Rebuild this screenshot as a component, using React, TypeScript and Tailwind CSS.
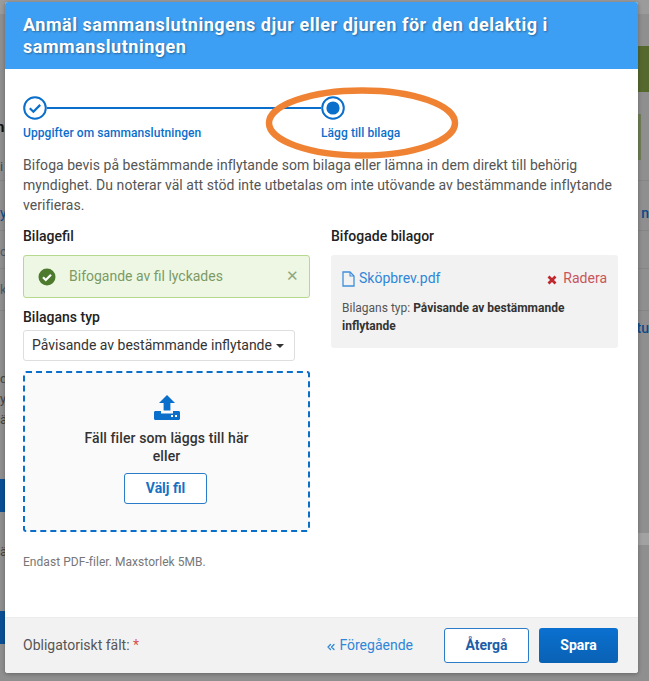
import { ChevronsLeft } from "lucide-react";

const font = "font-['Roboto',sans-serif]";

function CheckCircle() {
  return (
    <svg width="24" height="24" viewBox="0 0 24 24" fill="none" className="shrink-0">
      <circle cx="12" cy="12" r="10.8" stroke="#0a6ecb" strokeWidth="2" fill="#fff" />
      <path d="M6.8 12.2l3.6 3.5 6.8-6.8" stroke="#0a6ecb" strokeWidth="2.2" />
    </svg>
  );
}

function ActiveCircle() {
  return (
    <svg width="24" height="24" viewBox="0 0 24 24" fill="none" className="shrink-0">
      <circle cx="12" cy="12" r="10.8" stroke="#0a6ecb" strokeWidth="2" fill="#fff" />
      <circle cx="12" cy="12" r="6.6" fill="#0a6ecb" />
    </svg>
  );
}

function UploadIcon() {
  return (
    <svg width="28" height="28" viewBox="0 0 28 28" className="block">
      <path d="M14 1l8 8h-4.6v7.5h-6.8V9H6z" fill="#0a6ecb" />
      <path d="M1 18.5c0-.8.6-1.5 1.5-1.5h5.5v2.5h12V17h5.500c.9 0 1.500.7 1.500 1.500v6c0 .9-.6 1.500-1.500 1.500h-23C1.600 26 1 25.400 1 24.500z" fill="#0a6ecb" />
      <rect x="18" y="21" width="2" height="2" fill="#fff" />
      <rect x="22" y="21" width="2" height="2" fill="#fff" />
    </svg>
  );
}

export default function App() {
  return (
    <div className={`${font} relative w-[649px] h-[681px] overflow-hidden bg-[#8f8f8f] pl-[5px] pt-[2px]`}>
      {/* page behind the modal */}
      <div className="absolute left-0 top-0 w-full h-[14px] bg-[#9b9b9b]" />
      <div className="absolute right-0 top-[46px] w-[11px] h-[46px] bg-[#55692f]" />
      <div className="absolute left-[638px] top-[114px] w-[3px] h-[46px] bg-[#6f7f58]" />
      <div className="absolute left-0 top-[180px] w-full h-px bg-[#858585]" />
      <div className="absolute left-0 top-[230px] w-full h-px bg-[#858585]" />
      <div className="absolute left-0 top-[268px] w-full h-px bg-[#858585]" />
      <div className="absolute left-0 top-[310px] w-full h-px bg-[#858585]" />
      <div className="absolute left-[-4px] top-[116px] text-[15px] font-bold text-[#111]">n</div>
      <div className="absolute left-0 top-[157px] text-[13px] text-[#444]">i</div>
      <div className="absolute left-0 top-[203px] text-[14px] text-[#0a4a8a]">y</div>
      <div className="absolute left-0 top-[242px] text-[13px] text-[#4a5a6a]">c</div>
      <div className="absolute left-0 top-[280px] text-[13px] text-[#4a5a6a]">k</div>
      <div className="absolute left-0 top-[369px] text-[13px] text-[#444]">d</div>
      <div className="absolute left-0 top-[389px] text-[13px] text-[#444]">y</div>
      <div className="absolute left-0 top-[410px] text-[13px] text-[#444]">ä</div>
      <div className="absolute left-0 top-[542px] text-[13px] text-[#444]">ä</div>
      <div className="absolute right-0 top-[203px] text-[14px] font-medium text-[#0a4a8a]">n</div>
      <div className="absolute right-0 top-[318px] text-[14px] font-medium text-[#0a4a8a]">tu</div>
      <div className="absolute left-0 top-[479px] w-[5px] h-[33px] bg-[#0a4f96]" />
      <div className="absolute left-0 top-[611px] w-[5px] h-[33px] bg-[#0a4f96]" />
      <div className="absolute right-0 top-[533px] w-[11px] h-[12px] bg-[#a2a2a2]" />

      {/* modal */}
      <div className="relative flex flex-col w-[633px] h-[671px] rounded-[3px] bg-white overflow-hidden shadow-[0_1px_4px_rgba(0,0,0,0.3)]">
        <div className="h-[67px] shrink-0 bg-[#3d9ff3] px-[18px] pt-[12px] text-[18px] leading-[22px] font-bold tracking-[0.53px] text-white [text-shadow:1px_1px_2px_rgba(0,0,0,0.35)]">
          Anmäl sammanslutningens djur eller djuren för den delaktig i sammanslutningen
        </div>

        <div className="flex-1 px-[18px] pt-[27px]">
          {/* stepper */}
          <div className="flex items-center">
            <CheckCircle />
            <div className="w-[274px] h-[2px] bg-[#0a6ecb]" />
            <ActiveCircle />
          </div>
          <div className="flex mt-[5px] text-[12px] leading-[16px] font-medium tracking-[0.07px] text-[#0a6ecb]">
            <span className="w-[298px]">Uppgifter om sammanslutningen</span>
            <span>Lägg till bilaga</span>
          </div>

          <p className="mt-[14px] text-[14px] leading-[20px] text-[#555] tracking-[0.04px]">
            Bifoga bevis på bestämmande inflytande som bilaga eller lämna in dem direkt till behörig myndighet. Du noterar väl att stöd inte utbetalas om inte utövande av bestämmande inflytande verifieras.
          </p>

          <div className="mt-[12px] flex gap-[21px]">
            {/* left column */}
            <div className="w-[287px] shrink-0">
              <h3 className="text-[14px] leading-[18px] font-medium text-[#222]">Bilagefil</h3>
              <div className="mt-[10px] flex items-center h-[43px] rounded-[3px] border border-[#b5d98f] bg-[#edf7e3] pl-[14px] pr-[10px]">
                <svg width="18" height="18" viewBox="0 0 18 18" className="shrink-0">
                  <circle cx="9" cy="9" r="8.500" fill="#4e7a2e" />
                  <path d="M5 9.200l2.800 2.800 5.200-5.200" stroke="#fff" strokeWidth="2.200" fill="none" />
                </svg>
                <span className="ml-[13px] flex-1 text-[14px] text-[#7c9a66]">Bifogande av fil lyckades</span>
                <span className="text-[15px] leading-none text-[#8fa782]">✕</span>
              </div>

              <h3 className="mt-[10px] text-[14px] leading-[18px] font-medium text-[#222]">Bilagans typ</h3>
              <div className="mt-[4px] inline-flex items-center h-[31px] w-[272px] rounded-[3px] border border-[#dedede] pl-[8px] text-[14px] text-[#333] whitespace-nowrap">
                Påvisande av bestämmande inflytande
                <span className="ml-[4px] w-0 h-0 border-x-[4px] border-x-transparent border-t-[4px] border-t-[#333]" />
              </div>

              <div className="mt-[10px] h-[161px] rounded-[3px] border-2 border-dashed border-[#0a6ecb] bg-[#fafafa] flex flex-col items-center pt-[21px]">
                <UploadIcon />
                <p className="mt-[7px] w-[190px] text-center text-[14px] leading-[18px] font-medium tracking-[0.1px] text-[#333]">
                  Fäll filer som läggs till här eller
                </p>
                <button className="mt-[8px] mr-[2px] w-[83px] h-[31px] rounded-[3px] border border-[#2a7cc9] bg-white text-[14px] font-bold text-[#1670c4]">
                  Välj fil
                </button>
              </div>

              <p className="mt-[22px] text-[12px] leading-[16px] tracking-[0.05px] text-[#777]">Endast PDF-filer. Maxstorlek 5MB.</p>
            </div>

            {/* right column */}
            <div className="w-[287px] shrink-0">
              <h3 className="text-[14px] leading-[18px] font-medium text-[#222]">Bifogade bilagor</h3>
              <div className="mt-[10px] h-[93px] rounded-[3px] bg-[#f2f2f2] px-[11px] pt-[13px]">
                <div className="flex items-center">
                  <svg width="13" height="16" viewBox="0 0 13 16" fill="none" className="shrink-0">
                    <path d="M1 1h7l4 4v10H1z" stroke="#3f8fdc" strokeWidth="1.300" />
                    <path d="M8 1v4h4" stroke="#3f8fdc" strokeWidth="1.100" />
                  </svg>
                  <span className="ml-[4px] flex-1 text-[14px] text-[#2f86d8]">Sköpbrev.pdf</span>
                  <svg width="10" height="10" viewBox="0 0 10 10" className="mt-[2px]">
                    <path d="M1.500 1.500l7 7M8.500 1.500l-7 7" stroke="#c0272d" strokeWidth="2.800" />
                  </svg>
                  <span className="ml-[6px] text-[14px] text-[#c9555a]">Radera</span>
                </div>
                <p className="mt-[10px] text-[12px] leading-[18px] text-[#555]">
                  Bilagans typ: <b className="font-bold text-[#333]">Påvisande av bestämmande inflytande</b>
                </p>
              </div>
            </div>
          </div>
        </div>

        {/* footer */}
        <div className="h-[56px] shrink-0 bg-[#f2f2f2] border-t border-[#ececec] flex items-center pl-[18px] pr-[20px] text-[14px]">
          <span className="text-[#555]">
            Obligatoriskt fält: <span className="text-[#d9534f]">*</span>
          </span>
          <span className="ml-auto flex items-center text-[#2f86d8]">
            <ChevronsLeft size={12} strokeWidth={2.500} className="mr-[2px] mt-[2px]" />
            Föregående
          </span>
          <button className="ml-[31px] w-[85px] h-[35px] rounded-[3px] border border-[#2a7cc9] bg-white font-bold text-[#1a5ea8]">Återgå</button>
          <button className="ml-[10px] w-[79px] h-[35px] rounded-[3px] bg-gradient-to-b from-[#0a70d0] to-[#0a62b4] font-bold text-white">Spara</button>
        </div>
      </div>

      {/* annotation drawn on top */}
      <svg width="649" height="681" className="absolute left-0 top-0 pointer-events-none">
        <ellipse cx="362" cy="123" rx="93" ry="32.500" fill="none" stroke="#f08233" strokeWidth="6.500" />
      </svg>
    </div>
  );
}
